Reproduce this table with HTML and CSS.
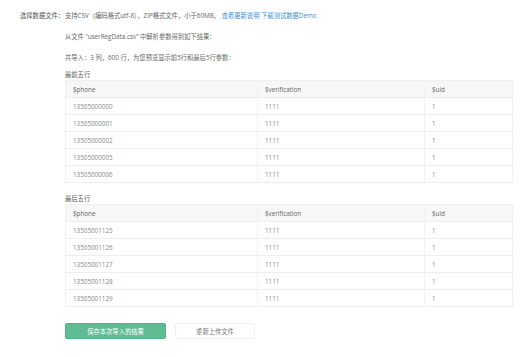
FILE: index.html
```html
<!DOCTYPE html>
<html>

<head>
    <meta charset="UTF-8">
    <meta name="viewport" content="width=device-width, initial-scale=1.0">
    <title>导入数据</title>
    <link rel="stylesheet" href="styles.css">
</head>

<body>
    <div class="page">
        <div class="form-row">
            <div class="form-label">选择数据文件：</div>
            <div class="form-body">
                <p class="line first">支持CSV（编码格式utf-8），ZIP格式文件，小于60MB。 <a href="#" class="link">查看更新说明</a> <a href="#" class="link">下载测试数据Demo</a></p>
                <p class="line">从文件 “userRegData.csv” 中解析参数得到如下结果：</p>
                <p class="line">共导入：3 列，600 行，为您预览显示前5行和最后5行参数：</p>

                <!-- 最前五行 -->
                <div class="preview">
                    <div class="preview-title">最前五行</div>
                    <table class="data-table">
                        <thead>
                            <tr><th class="col-phone">$phone</th><th class="col-ver">$verification</th><th>$uid</th></tr>
                        </thead>
                        <tbody>
                            <tr><td>13505000000</td><td>1111</td><td>1</td></tr>
                            <tr><td>13505000001</td><td>1111</td><td>1</td></tr>
                            <tr><td>13505000002</td><td>1111</td><td>1</td></tr>
                            <tr><td>13505000005</td><td>1111</td><td>1</td></tr>
                            <tr><td>13505000006</td><td>1111</td><td>1</td></tr>
                        </tbody>
                    </table>
                </div>

                <!-- 最后五行 -->
                <div class="preview">
                    <div class="preview-title">最后五行</div>
                    <table class="data-table">
                        <thead>
                            <tr><th class="col-phone">$phone</th><th class="col-ver">$verification</th><th>$uid</th></tr>
                        </thead>
                        <tbody>
                            <tr><td>13505001125</td><td>1111</td><td>1</td></tr>
                            <tr><td>13505001126</td><td>1111</td><td>1</td></tr>
                            <tr><td>13505001127</td><td>1111</td><td>1</td></tr>
                            <tr><td>13505001128</td><td>1111</td><td>1</td></tr>
                            <tr><td>13505001129</td><td>1111</td><td>1</td></tr>
                        </tbody>
                    </table>
                </div>

                <div class="actions">
                    <button class="btn btn-primary">保存本次导入的结果</button>
                    <button class="btn btn-default">重新上传文件</button>
                </div>
            </div>
        </div>
    </div>
</body>

</html>
```

FILE: styles.css
```css
body {
    font-family: "Open Sans", "Noto Sans CJK SC", sans-serif;
    font-size: 6.3px;
    color: #666666;
    background-color: #ffffff;
    margin: 0;
    padding: 0;
}

.page {
    padding: 10px 0 0 20px;
}

.form-row {
    display: flex;
}

.form-label {
    width: 45px;
    line-height: 12px;
    color: #555555;
    white-space: nowrap;
}

.form-body {
    width: 448px;
}

.line {
    margin: 0 0 9px;
    line-height: 12px;
}

.link {
    color: #3d8fd6;
    text-decoration: none;
}

.preview {
    margin-top: -3px;
    margin-bottom: 14px;
}

.preview-title {
    line-height: 10px;
    color: #555555;
}

.data-table {
    width: 448px;
    border-collapse: collapse;
    border: 1px solid #f0f0f0;
}

.data-table th,
.data-table td {
    height: 16px;
    padding: 0 7px;
    text-align: left;
    font-weight: normal;
    border-bottom: 1px solid #eeeeee;
    border-right: 1px solid #f2f2f2;
}

.data-table th {
    background-color: #f7f7f7;
    color: #666666;
}

.data-table td {
    color: #888888;
}

.col-phone {
    width: 177px;
}

.col-ver {
    width: 152px;
}

.actions {
    display: flex;
    gap: 9px;
    margin-top: 16px;
}

.btn {
    height: 16px;
    font-family: inherit;
    font-size: 6.3px;
    border-radius: 2px;
    cursor: pointer;
}

.btn-primary {
    width: 101px;
    color: #ffffff;
    background-color: #5fbb92;
    border: 1px solid #55b388;
}

.btn-default {
    width: 80px;
    color: #777777;
    background-color: #ffffff;
    border: 1px solid #f0f0f0;
}
```
